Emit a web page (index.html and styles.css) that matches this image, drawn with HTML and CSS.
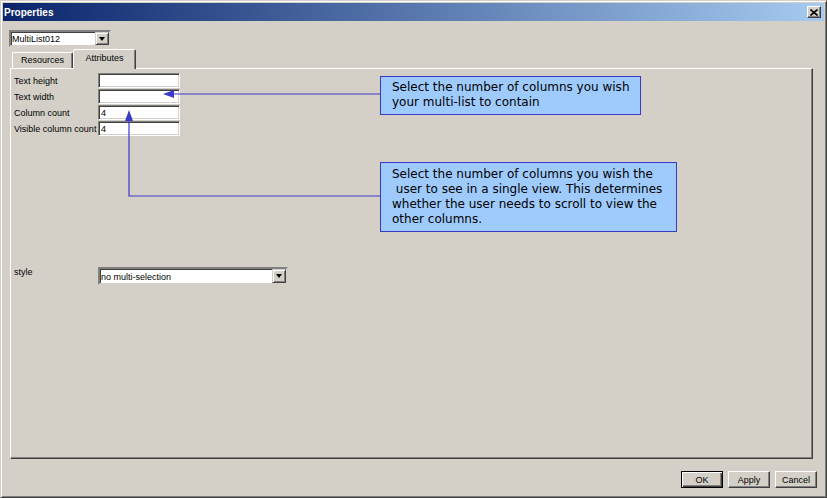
FILE: index.html
```html
<!DOCTYPE html>
<html>
<head>
  <title>Properties</title>
  <link rel="stylesheet" href="styles.css">
</head>
<body>
  <div class="window">
    <div class="titlebar">
      <span class="title">Properties</span>
      <span class="close-btn">
        <svg width="8" height="7" viewBox="0 0 8 7"><path d="M0.5 0.5 L7.5 6.5 M7.5 0.5 L0.5 6.5" stroke="#000" stroke-width="1.6"/></svg>
      </span>
    </div>

    <div class="dialog-body">
      <div class="combo object-combo">
        <span class="combo-value">MultiList012</span>
        <span class="combo-arrow"><span class="arrow-glyph"></span></span>
      </div>

      <div class="tab-control">
        <div class="tabs">
          <div class="tab">Resources</div>
          <div class="tab tab-active">Attributes</div>
        </div>
        <div class="tab-panel">
          <div class="field-list">
            <div class="field-row">
              <span class="field-label">Text height</span>
              <div class="text-input"></div>
            </div>
            <div class="field-row">
              <span class="field-label">Text width</span>
              <div class="text-input"></div>
            </div>
            <div class="field-row">
              <span class="field-label">Column count</span>
              <div class="text-input">4</div>
            </div>
            <div class="field-row">
              <span class="field-label">Visible column count</span>
              <div class="text-input">4</div>
            </div>
          </div>

          <div class="field-row style-row">
            <span class="field-label">style</span>
            <div class="combo style-combo">
              <span class="combo-value">no multi-selection</span>
              <span class="combo-arrow"><span class="arrow-glyph"></span></span>
            </div>
          </div>
        </div>
      </div>

      <div class="button-row">
        <button class="btn btn-default">OK</button>
        <button class="btn">Apply</button>
        <button class="btn">Cancel</button>
      </div>
    </div>

    <!-- help annotations -->
    <div class="callout callout-columns">
      Select the number of columns you wish<br>your multi-list to contain
    </div>
    <div class="callout callout-visible">
      Select the number of columns you wish the<br>&nbsp;user to see in a single view. This determines<br>whether the user needs to scroll to view the<br>other columns.
    </div>

    <svg class="arrows" width="827" height="498" viewBox="0 0 827 498">
      <path d="M380 94 H171" stroke="#3a3ac8" stroke-width="1.2" fill="none"/>
      <polygon points="163,94 174,90 174,98" fill="#3a3ac8"/>
      <path d="M380 196 H129 V119" stroke="#3a3ac8" stroke-width="1.2" fill="none"/>
      <polygon points="129,110 125,121 133,121" fill="#3a3ac8"/>
    </svg>
  </div>
</body>
</html>
```

FILE: styles.css
```css
:root {
  --color-face: #d4d0c8;
  --color-light: #ffffff;
  --color-shadow: #808080;
  --color-dark: #404040;
  --color-callout: #9fcbfc;
  --color-callout-border: #3a3ac8;

  --font-ui: "Liberation Sans", Arial, sans-serif;
  --font-note: "DejaVu Sans", Verdana, sans-serif;
}

* {
  box-sizing: border-box;
}

body {
  margin: 0;
  background-color: var(--color-face);
  font-family: var(--font-ui);
  font-size: 9px;
  color: #000;
}

.window {
  position: relative;
  width: 827px;
  height: 498px;
  padding: 2px;
  background-color: var(--color-face);
  border: 1px solid;
  border-color: var(--color-face) var(--color-dark) var(--color-dark) var(--color-face);
  box-shadow: inset 1px 1px var(--color-light), inset -1px -1px var(--color-shadow);
}

/* Title bar */
.titlebar {
  display: flex;
  align-items: center;
  justify-content: space-between;
  height: 18px;
  padding: 0 3px 0 1px;
  background: linear-gradient(to right, #0a246a, #a6caf0);
}

.title {
  color: #fff;
  font-weight: bold;
  font-size: 10px;
}

.close-btn {
  display: flex;
  align-items: center;
  justify-content: center;
  width: 14px;
  height: 12px;
  background-color: var(--color-face);
  border: 1px solid;
  border-color: var(--color-light) var(--color-dark) var(--color-dark) var(--color-light);
  box-shadow: inset -1px -1px var(--color-shadow);
}

.dialog-body {
  display: flex;
  flex-direction: column;
}

/* Combo boxes */
.combo {
  display: flex;
  align-items: stretch;
  background-color: #fff;
  border: 2px solid;
  border-color: var(--color-shadow) var(--color-face) var(--color-face) var(--color-shadow);
  box-shadow: inset 1px 1px var(--color-dark), inset -1px -1px var(--color-light);
}

.object-combo {
  width: 102px;
  height: 17px;
  margin: 9px 0 0 6px;
}

.combo-value {
  flex: 1;
  display: flex;
  align-items: center;
  padding-left: 1px;
  margin: 1px 0 0 0;
}

.combo-arrow {
  display: flex;
  align-items: center;
  justify-content: center;
  width: 14px;
  background-color: var(--color-face);
  border: 1px solid;
  border-color: var(--color-face) var(--color-dark) var(--color-dark) var(--color-face);
  box-shadow: inset 1px 1px var(--color-light), inset -1px -1px var(--color-shadow);
}

.arrow-glyph {
  width: 0;
  height: 0;
  border-left: 3.5px solid transparent;
  border-right: 3.5px solid transparent;
  border-top: 4px solid #000;
}

/* Tabs */
.tab-control {
  margin: 2px 0 0 7px;
  width: 803px;
}

.tabs {
  display: flex;
  align-items: flex-end;
  padding-left: 2px;
  height: 19px;
}

.tab {
  display: flex;
  align-items: center;
  justify-content: center;
  height: 16px;
  width: 61px;
  padding-bottom: 1px;
  border: 1px solid;
  border-bottom: none;
  border-color: var(--color-light) var(--color-dark) transparent var(--color-light);
  border-radius: 2px 2px 0 0;
  box-shadow: inset -1px 0 var(--color-shadow);
}

.tab-active {
  position: relative;
  z-index: 1;
  width: 63px;
  height: 20px;
  margin-bottom: -1px;
  padding-bottom: 3px;
  background-color: var(--color-face);
}

.tab-panel {
  height: 391px;
  padding: 4px 3px;
  border: 1px solid;
  border-color: var(--color-light) var(--color-dark) var(--color-dark) var(--color-light);
  box-shadow: inset -1px -1px var(--color-shadow);
}

/* Fields */
.field-list {
  display: flex;
  flex-direction: column;
  gap: 1px;
}

.field-row {
  display: flex;
  align-items: center;
}

.field-label {
  width: 84px;
  white-space: nowrap;
}

.text-input {
  display: flex;
  align-items: center;
  width: 82px;
  height: 15px;
  padding: 1px 0 0 2px;
  background-color: #fff;
  border: 1px solid;
  border-color: var(--color-shadow) var(--color-light) var(--color-light) var(--color-shadow);
  box-shadow: inset 1px 1px var(--color-dark), inset -1px -1px var(--color-face);
}

.style-row {
  align-items: flex-start;
  margin-top: 131px;
}

.style-combo {
  width: 190px;
  height: 18px;
}

/* Buttons */
.button-row {
  display: flex;
  justify-content: flex-end;
  gap: 5px;
  margin-top: 12px;
  padding-right: 7px;
}

.btn {
  width: 42px;
  height: 17px;
  padding: 0;
  font-family: var(--font-ui);
  font-size: 9px;
  color: #000;
  background-color: var(--color-face);
  border: 1px solid;
  border-color: var(--color-light) var(--color-dark) var(--color-dark) var(--color-light);
  box-shadow: inset -1px -1px var(--color-shadow);
}

.btn-default {
  border: 1px solid #000;
  box-shadow: inset 1px 1px var(--color-light), inset -1px -1px var(--color-dark), inset -2px -2px var(--color-shadow);
}

/* Help callouts */
.callout {
  position: absolute;
  left: 379px;
  padding: 3px 0 0 11px;
  font-family: var(--font-note);
  font-size: 12px;
  line-height: 15px;
  color: #000;
  background-color: var(--color-callout);
  border: 1px solid var(--color-callout-border);
  white-space: nowrap;
}

.callout-columns {
  top: 75px;
  width: 261px;
  height: 39px;
}

.callout-visible {
  top: 161px;
  width: 297px;
  height: 70px;
  padding-top: 4px;
}

.arrows {
  position: absolute;
  left: -1px;
  top: -1px;
  pointer-events: none;
}
```
